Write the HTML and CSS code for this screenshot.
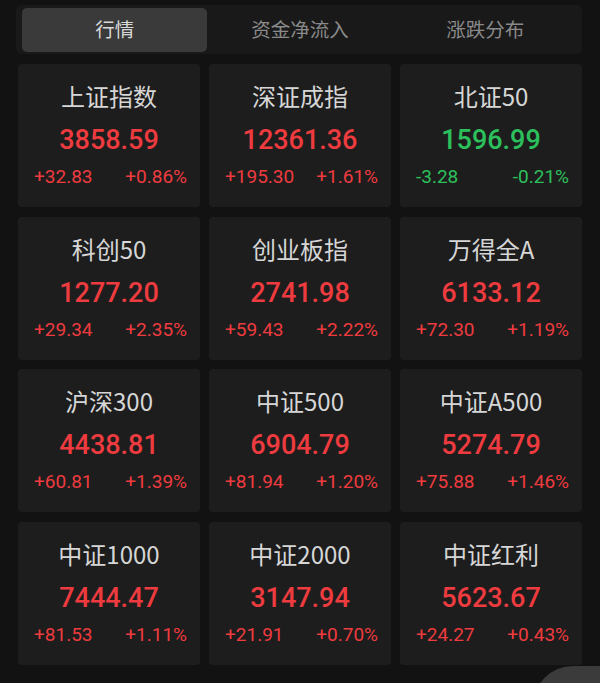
FILE: index.html
```html
<!DOCTYPE html>
<html lang="zh">
<head>
<meta charset="utf-8">
<title>行情</title>
<link rel="stylesheet" href="styles.css">
</head>
<body>
<div class="page">
  <div class="tabs">
    <div class="tab active">行情</div>
    <div class="tab">资金净流入</div>
    <div class="tab">涨跌分布</div>
  </div>
  <div class="grid">
    <div class="card"><div class="name">上证指数</div><div class="value up">3858.59</div><div class="chg up"><span>+32.83</span><span>+0.86%</span></div></div>
    <div class="card"><div class="name">深证成指</div><div class="value up">12361.36</div><div class="chg up"><span>+195.30</span><span>+1.61%</span></div></div>
    <div class="card"><div class="name">北证50</div><div class="value down">1596.99</div><div class="chg down"><span>-3.28</span><span>-0.21%</span></div></div>
    <div class="card"><div class="name">科创50</div><div class="value up">1277.20</div><div class="chg up"><span>+29.34</span><span>+2.35%</span></div></div>
    <div class="card"><div class="name">创业板指</div><div class="value up">2741.98</div><div class="chg up"><span>+59.43</span><span>+2.22%</span></div></div>
    <div class="card"><div class="name">万得全A</div><div class="value up">6133.12</div><div class="chg up"><span>+72.30</span><span>+1.19%</span></div></div>
    <div class="card"><div class="name">沪深300</div><div class="value up">4438.81</div><div class="chg up"><span>+60.81</span><span>+1.39%</span></div></div>
    <div class="card"><div class="name">中证500</div><div class="value up">6904.79</div><div class="chg up"><span>+81.94</span><span>+1.20%</span></div></div>
    <div class="card"><div class="name">中证A500</div><div class="value up">5274.79</div><div class="chg up"><span>+75.88</span><span>+1.46%</span></div></div>
    <div class="card"><div class="name">中证1000</div><div class="value up">7444.47</div><div class="chg up"><span>+81.53</span><span>+1.11%</span></div></div>
    <div class="card"><div class="name">中证2000</div><div class="value up">3147.94</div><div class="chg up"><span>+21.91</span><span>+0.70%</span></div></div>
    <div class="card"><div class="name">中证红利</div><div class="value up">5623.67</div><div class="chg up"><span>+24.27</span><span>+0.43%</span></div></div>
  </div>
  <div class="fab"></div>
</div>
</body>
</html>
```
FILE: styles.css
```css
html, body {
  margin: 0;
  padding: 0;
  background: #121212;
}
.page {
  position: relative;
  width: 600px;
  height: 683px;
  overflow: hidden;
  padding: 5px 18px 0;
  box-sizing: border-box;
  font-family: "Noto Sans CJK SC", "Noto Sans", sans-serif;
}
.tabs {
  display: flex;
  margin: 0 0 10px -2px;
  width: 566px;
  height: 49px;
  padding: 3px 4px 2px 6px;
  box-sizing: border-box;
  background: #191919;
  border-radius: 6px;
}
.tab {
  flex: 1;
  display: flex;
  align-items: center;
  justify-content: center;
  padding-bottom: 4px;
  font-size: 19.5px;
  color: #8a8a8a;
  border-radius: 5px;
}
.tab.active {
  background: #3a3a3a;
  color: #d8d8d8;
}
.grid {
  display: grid;
  grid-template-columns: repeat(3, 182px);
  grid-auto-rows: 143px;
  column-gap: 9px;
  row-gap: 9.5px;
}
.card {
  background: #1d1d1d;
  border-radius: 4px;
  padding-top: 17px;
  box-sizing: border-box;
  display: flex;
  flex-direction: column;
  align-items: center;
}
.name {
  height: 30px;
  line-height: 30px;
  font-size: 24px;
  color: #d6d6d6;
  font-family: "Noto Sans CJK SC", sans-serif;
}
.value {
  margin-top: 12px;
  height: 34px;
  line-height: 34px;
  font-size: 27px;
  font-weight: 500;
  font-family: Roboto, "Noto Sans", sans-serif;
}
.chg {
  margin-top: 8px;
  height: 24px;
  line-height: 24px;
  font-size: 19px;
  align-self: stretch;
  display: flex;
  justify-content: space-between;
  padding: 0 13px 0 16px;
  font-family: Roboto, "Noto Sans", sans-serif;
}
.up { color: #ee3b3f; }
.down { color: #2cc05c; }
.fab {
  position: absolute;
  left: 533px;
  top: 666px;
  width: 140px;
  height: 80px;
  border-radius: 42px;
  background: #3b3b3b;
}
```
